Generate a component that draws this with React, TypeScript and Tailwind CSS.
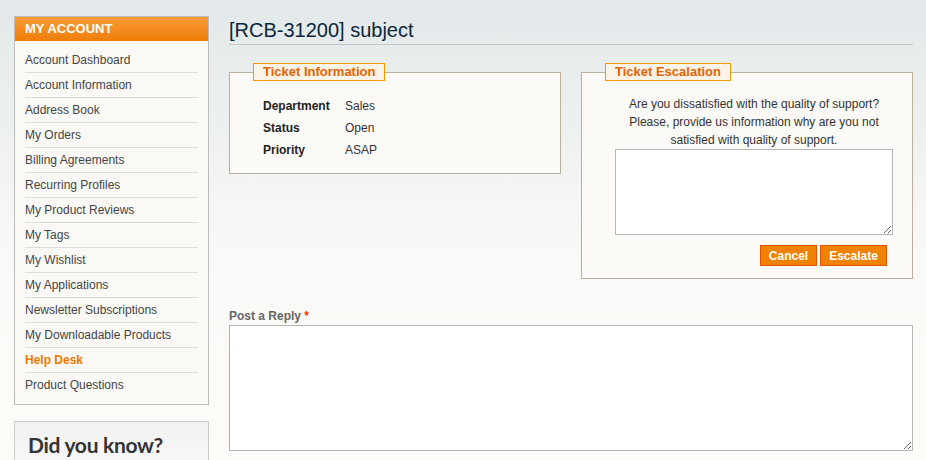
import { type ReactNode } from "react";

const NAV = [
  "Account Dashboard",
  "Account Information",
  "Address Book",
  "My Orders",
  "Billing Agreements",
  "Recurring Profiles",
  "My Product Reviews",
  "My Tags",
  "My Wishlist",
  "My Applications",
  "Newsletter Subscriptions",
  "My Downloadable Products",
  "Help Desk",
  "Product Questions",
];

const INFO = [
  ["Department", "Sales"],
  ["Status", "Open"],
  ["Priority", "ASAP"],
];

function Box({ title, className, children }: { title: string; className?: string; children: ReactNode }) {
  return (
    <fieldset className={`border border-[#bbafa0] bg-[#fbfaf6] pl-[23px] ${className ?? ""}`}>
      <legend className="border border-[#f19900] bg-[#fbf4e6] px-[9px] text-[13px] font-bold leading-[16px] text-[#e76200]">
        {title}
      </legend>
      {children}
    </fieldset>
  );
}

function Sidebar() {
  return (
    <aside className="flex w-[195px] shrink-0 flex-col gap-[16px]">
      <div className="border border-[#bbb] bg-[#faf9f5]">
        <div className="h-[24px] bg-gradient-to-b from-[#f99b35] to-[#ef7d00] pl-[10px] text-[13px] font-bold leading-[23px] text-white">
          MY ACCOUNT
        </div>
        <ul className="px-[10px] pb-[6px] pt-[7px]">
          {NAV.map((item, i) => (
            <li
              key={item}
              className={`h-[25px] text-[12px] leading-[24px] ${i < NAV.length - 1 ? "border-b border-[#ddd]" : ""} ${
                item === "Help Desk" ? "font-bold text-[#f17800]" : "text-[#444]"
              }`}
            >
              {item}
            </li>
          ))}
        </ul>
      </div>
      <div className="h-[60px] border border-[#ccc] bg-gradient-to-b from-[#f1f1f1] to-[#fbfbfb] pl-[13px] pt-[7px]">
        <div className="font-['Lato'] text-[21px] font-bold leading-[32px] tracking-[-0.3px] text-[#333]">
          Did you know?
        </div>
      </div>
    </aside>
  );
}

export default function App() {
  return (
    <div className="h-[460px] w-[926px] overflow-hidden bg-gradient-to-b from-[#e2e8ea] via-[#f9f9f7] via-55% to-[#fefcf8] font-['Liberation_Sans',Arial,sans-serif]">
      <div className="flex gap-[20px] pl-[14px] pr-[13px] pt-[16px]">
        <Sidebar />
        <main className="flex min-w-0 flex-1 flex-col">
          <h1 className="border-b border-[#c8c8c8] pb-[2px] pt-[2px] text-[20px] leading-[24px] text-[#0a263c]">
            [RCB-31200] subject
          </h1>
          <div className="mt-[18px] flex items-start justify-between">
            <Box title="Ticket Information" className="h-[111px] w-[332px] pr-[23px]">
              <table className="ml-[10px] mt-[14px] text-[12px] text-[#333]">
                <tbody>
                  {INFO.map(([k, v]) => (
                    <tr key={k} className="h-[22px]">
                      <th className="w-[82px] p-0 text-left font-bold text-[#222]">{k}</th>
                      <td className="p-0">{v}</td>
                    </tr>
                  ))}
                </tbody>
              </table>
            </Box>
            <Box title="Ticket Escalation" className="h-[216px] w-[332px] pr-[19px]">
              <div className="ml-[10px] w-[278px]">
                <p className="mt-[14px] text-center text-[12px] leading-[18px] text-[#333]">
                  Are you dissatisfied with the quality of support?
                  <br />
                  Please, provide us information why are you not
                  <br />
                  satisfied with quality of support.
                </p>
                <textarea className="block h-[86px] w-full border border-[#b6b6b6] bg-white" />
                <div className="mr-[6px] mt-[10px] flex justify-end gap-[3px]">
                  <button className="h-[21px] w-[57px] border border-[#de5400] bg-[#f18200] text-[12px] font-bold text-white">
                    Cancel
                  </button>
                  <button className="h-[21px] w-[67px] border border-[#de5400] bg-[#f18200] text-[12px] font-bold text-white">
                    Escalate
                  </button>
                </div>
              </div>
            </Box>
          </div>
          <label className="mt-[30px] text-[12px] font-bold leading-[15px] text-[#666]">
            Post a Reply <span className="text-[#eb340a]">*</span>
          </label>
          <textarea className="mt-[1px] block h-[126px] w-full border border-[#b6b6b6] bg-white" />
        </main>
      </div>
    </div>
  );
}
